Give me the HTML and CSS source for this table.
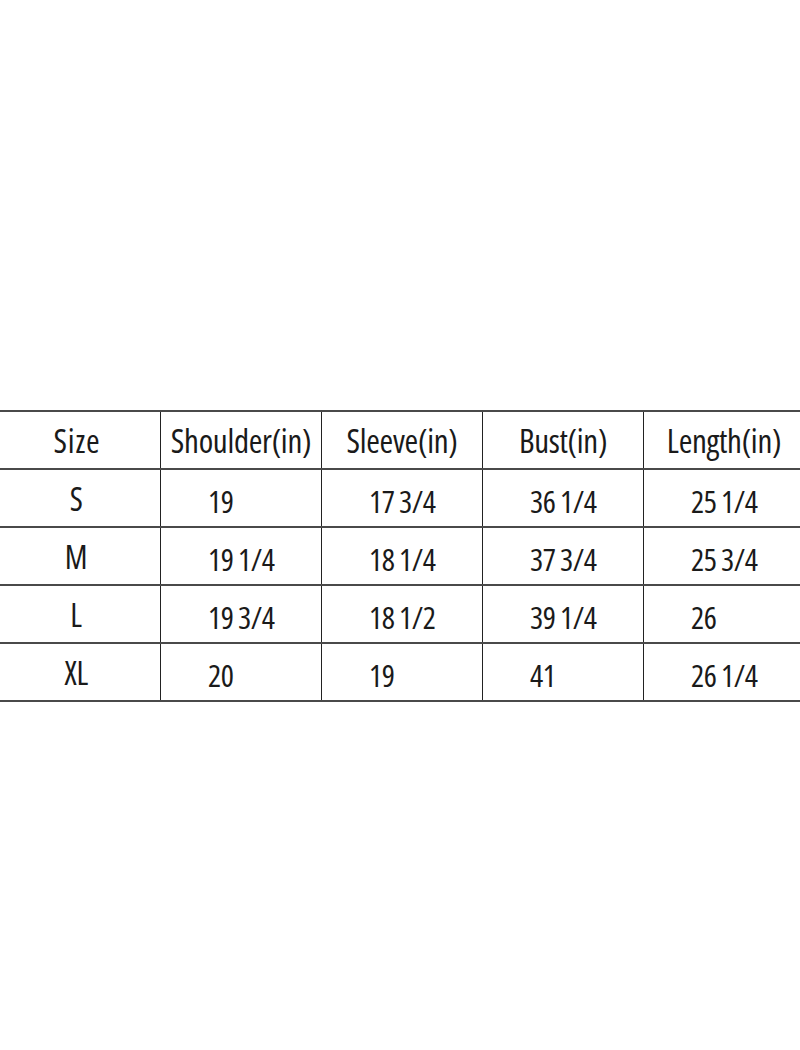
FILE: index.html
```html
<!DOCTYPE html>
<html>
<head>
<meta charset="utf-8">
<link rel="stylesheet" href="styles.css">
</head>
<body>
<div class="page">
  <table class="size-table">
    <thead>
      <tr>
        <th class="size">Size</th>
        <th>Shoulder(in)</th>
        <th>Sleeve(in)</th>
        <th>Bust(in)</th>
        <th>Length(in)</th>
      </tr>
    </thead>
    <tbody>
      <tr><td class="size">S</td><td>19</td><td>17 3/4</td><td>36 1/4</td><td>25 1/4</td></tr>
      <tr><td class="size">M</td><td>19 1/4</td><td>18 1/4</td><td>37 3/4</td><td>25 3/4</td></tr>
      <tr><td class="size">L</td><td>19 3/4</td><td>18 1/2</td><td>39 1/4</td><td>26</td></tr>
      <tr><td class="size">XL</td><td>20</td><td>19</td><td>41</td><td>26 1/4</td></tr>
    </tbody>
  </table>
</div>
</body>
</html>
```
FILE: styles.css
```css
html, body {
  margin: 0;
  padding: 0;
  background: #fff;
}
.page {
  padding-top: 410px;
}
.size-table {
  width: 800px;
  border-collapse: collapse;
  table-layout: fixed;
  font-family: "Open Sans", sans-serif;
  font-stretch: 75%;
  color: #1a1a1a;
}
.size-table th,
.size-table td {
  width: 160px;
  border-top: 2px solid #4a4a4a;
  border-bottom: 2px solid #4a4a4a;
  border-left: 1px solid #222;
  border-right: 1px solid #222;
  padding: 0;
}
.size-table th:first-child,
.size-table td:first-child { border-left: none; }
.size-table th:last-child,
.size-table td:last-child { border-right: none; }
.size-table th {
  height: 56px;
  font-weight: normal;
  font-size: 33px;
  letter-spacing: -0.3px;
  text-align: center;
}
.size-table th.size {
  width: 154px;
  letter-spacing: 0.8px;
  padding-right: 6px;
}
.size-table td {
  height: 50px;
  font-size: 31px;
  letter-spacing: -0.4px;
  word-spacing: -1px;
  text-align: left;
  padding-left: 47px;
  padding-top: 6px;
}
.size-table td.size {
  height: 56px;
  text-align: center;
  font-size: 32px;
  padding-left: 0;
  padding-right: 8px;
  padding-top: 0;
}
```
